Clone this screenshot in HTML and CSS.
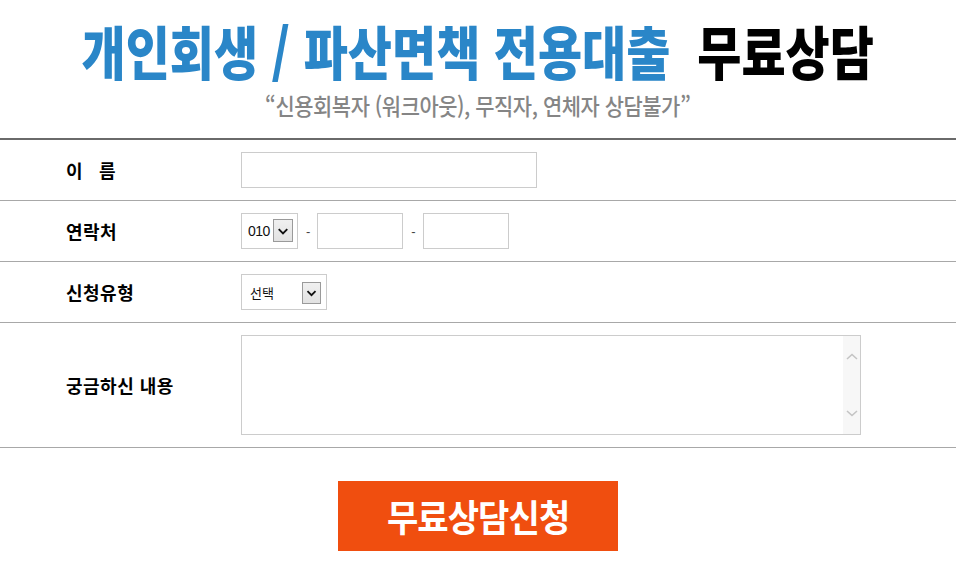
FILE: index.html
```html
<!DOCTYPE html>
<html lang="ko">
<head>
<meta charset="utf-8">
<title>무료상담</title>
<link rel="stylesheet" href="styles.css">
</head>
<body>
<div class="page">
  <header class="head">
    <h1 class="title"><span class="title-in"><span class="blue">개인회생 / 파산면책 전용대출</span><span class="black">무료상담</span></span></h1>
    <p class="sub"><span class="sub-in">“신용회복자 (워크아웃), 무직자, 연체자 상담불가”</span></p>
  </header>

  <form class="form">
    <div class="row">
      <div class="label">이<span class="gap"></span>름</div>
      <div class="field"><input class="input name" type="text"></div>
    </div>
    <div class="row">
      <div class="label">연락처</div>
      <div class="field">
        <div class="sel sel-phone">
          <select><option>010</option></select>
          <span class="arrow"><svg width="19" height="22" viewBox="0 0 19 22"><path d="M5 9 L9.5 13.5 L14 9" fill="none" stroke="#111" stroke-width="2"/></svg></span>
        </div>
        <span class="dash">-</span>
        <input class="input tel" type="text">
        <span class="dash">-</span>
        <input class="input tel" type="text">
      </div>
    </div>
    <div class="row">
      <div class="label">신청유형</div>
      <div class="field">
        <div class="sel sel-type">
          <select><option>선택</option></select>
          <span class="arrow"><svg width="19" height="22" viewBox="0 0 19 22"><path d="M5 9 L9.5 13.5 L14 9" fill="none" stroke="#111" stroke-width="2"/></svg></span>
        </div>
      </div>
    </div>
    <div class="row">
      <div class="label">궁금하신 내용</div>
      <div class="field">
        <div class="ta">
          <textarea></textarea>
          <div class="sbar">
            <svg width="16" height="10" viewBox="0 0 16 10"><path d="M3 7 L8 2.5 L13 7" fill="none" stroke="#c4c4c4" stroke-width="1.6"/></svg>
            <svg width="16" height="10" viewBox="0 0 16 10"><path d="M3 3 L8 7.5 L13 3" fill="none" stroke="#c4c4c4" stroke-width="1.6"/></svg>
          </div>
        </div>
      </div>
    </div>
    <div class="actions">
      <button type="button" class="submit"><span class="submit-in">무료상담신청</span></button>
    </div>
  </form>
</div>
</body>
</html>
```

FILE: styles.css
```css
* { box-sizing: border-box; }
html, body { margin: 0; padding: 0; background: #fff; }
body { font-family: "Noto Sans CJK KR", "Noto Sans", sans-serif; color: #111; }
.page { width: 956px; }

.head { padding-top: 18px; }
.title {
  margin: 0;
  display: flex;
  justify-content: center;
  font-size: 50px;
  line-height: 62px;
  font-weight: 900;
  white-space: nowrap;
}
.title-in { display: inline-block; transform: scale(0.96, 1.16); }
.blue { color: #2a86c8; }
.black { color: #000; margin-left: 28px; }

.sub {
  margin: 11px 0 0;
  display: flex;
  justify-content: center;
  font-size: 23px;
  line-height: 28px;
  font-weight: 500;
  color: #858585;
  white-space: nowrap;
}
.sub-in { display: inline-block; transform: scaleX(0.91); letter-spacing: -0.5px; }

.form { margin-top: 19px; border-top: 2px solid #6a6a6a; }
.row {
  display: flex;
  align-items: center;
  padding: 12px 0;
  border-bottom: 1px solid #a8a8a8;
}
.label {
  width: 241px;
  padding-left: 66px;
  font-size: 18px;
  font-weight: 700;
  letter-spacing: 0.5px;
  color: #000;
  white-space: nowrap;
}
.gap { display: inline-block; width: 16px; }
.field { display: flex; align-items: center; }

.input {
  height: 36px;
  border: 1px solid #cccccc;
  background: #fff;
  padding: 0 6px;
  margin: 0;
  outline: none;
  font: inherit;
}
.name { width: 296px; }
.tel { width: 86px; }
.dash { margin: 0 7px 0 8px; color: #444; font-size: 13px; font-family: "Liberation Sans", sans-serif; }

.sel { position: relative; height: 36px; border: 1px solid #cccccc; background: #fff; }
.sel select {
  appearance: none;
  -webkit-appearance: none;
  border: 0;
  background: transparent;
  width: 100%;
  height: 100%;
  margin: 0;
  outline: none;
  color: #111;
}
.sel-phone { width: 57px; }
.sel-phone select { font: 14px "Liberation Sans", sans-serif; padding: 0 0 0 6px; letter-spacing: -0.5px; }
.sel-type { width: 86px; }
.sel-type select { font: 13px "Noto Sans CJK KR", sans-serif; padding: 0 0 0 8px; }
.arrow {
  position: absolute;
  right: 4px;
  top: 5px;
  width: 20px;
  height: 23px;
  border: 1px solid #9a9a9a;
  background: linear-gradient(#f0f0f0, #e2e2e2);
  display: flex;
  align-items: center;
  justify-content: center;
  pointer-events: none;
}
.sel-type .arrow { right: 5px; top: 7px; width: 19px; height: 22px; }

.ta { position: relative; width: 620px; height: 100px; border: 1px solid #cccccc; }
.ta textarea {
  display: block;
  width: 100%;
  height: 100%;
  border: 0;
  resize: none;
  outline: none;
  overflow: hidden;
  padding: 6px;
  font: inherit;
}
.sbar {
  position: absolute;
  top: 0;
  right: 0;
  width: 17px;
  height: 98px;
  background: #f7f7f7;
  display: flex;
  flex-direction: column;
  justify-content: space-between;
  align-items: center;
  padding: 16px 0 16px;
}

.actions { display: flex; justify-content: center; padding-top: 33px; }
.submit {
  width: 280px;
  height: 70px;
  border: 0;
  margin: 0;
  background: #f04e0f;
  color: #fff;
  font-family: "Noto Sans CJK KR", sans-serif;
  font-size: 37px;
  font-weight: 700;
  cursor: pointer;
  padding: 0;
  white-space: nowrap;
}
.submit-in { display: inline-block; transform: scaleX(0.92); letter-spacing: -1px; }
```
